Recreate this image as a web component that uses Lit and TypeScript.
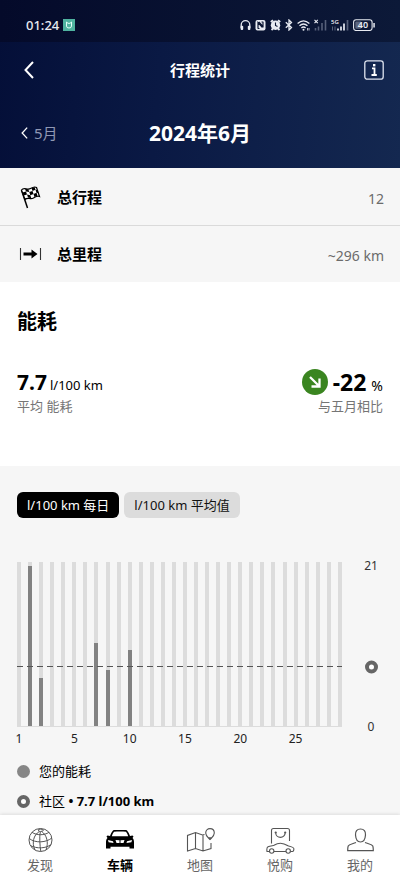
import { LitElement, html, css, svg } from "lit";
import { customElement, state } from "lit/decorators.js";
import { classMap } from "lit/directives/class-map.js";
import { styleMap } from "lit/directives/style-map.js";

const SCALE_MAX = 21;
const COMMUNITY_AVERAGE = 7.7;
const DAYS = 30;

/** Consumption in l/100 km, keyed by column index. */
const CONSUMPTION: Record<number, number> = { 1: 20.5, 2: 6.2, 7: 10.7, 8: 7.3, 10: 9.8 };
const AXIS_LABELS: Record<number, string> = { 0: "1", 5: "5", 10: "10", 15: "15", 20: "20", 25: "25" };

const FONT = css`"Noto Sans", "Noto Sans CJK SC", sans-serif`;

const chevron = html`<svg class="chevron" viewBox="0 0 10 18" aria-hidden="true">
  <path d="M9 1 L1.5 9 L9 17" fill="none" stroke="currentColor" stroke-width="2" />
</svg>`;

const globeIcon = svg`
  <g fill="none" stroke="#555" stroke-width="1">
    <circle cx="14.500" cy="13" r="11.500" />
    <path d="M13.300 4.500 C7.500 8 5.500 16 9 23 M14.300 4.800 C13.300 10 13.800 18 14.800 24.500 M15.800 4.500 C20.500 8 23 15 20 23" />
    <path d="M6 5.300 C10.500 8.500 18.500 8.500 23 5.300 M3.200 11.500 C9.500 16.500 20.500 15.500 25.800 11 M4.500 18.500 C10.500 22 20.500 21.500 24.800 17.500" />
    <path d="M12 3.200 C13 5 16 5 17.500 3.200 C16.500 1.800 13 1.800 12 3.200 Z" />
  </g>`;

const carIcon = svg`
  <path fill="#000" fill-rule="evenodd" d="M7 3.500 C7.500 3 8.300 3 9 3 H19 C20 3 20.500 3 21 3.500 C22.300 5 23.300 7 24 9 L26.500 8.500 L27.500 9.500 L26.500 11 C27.600 12 28 13.500 28 15 V21.500 H23.500 V19.800 H4.500 V21.500 H0 V15 C0 13.500 .4 12 1.500 11 L.5 9.500 L1.500 8.500 L4 9 C4.700 7 5.700 5 7 3.500 Z M8 4.700 C7 6 6.300 7.500 5.800 9.300 H22.200 C21.700 7.500 21 6 20 4.700 C16 4.300 12 4.300 8 4.700 Z M2 13 L2.600 15.300 L7.500 16 L7 14.200 Z M26 13 L25.400 15.300 L20.500 16 L21 14.200 Z M9.500 13 L10.500 16 H13.500 V13.300 Z M18.500 13 L17.500 16 H14.500 V13.300 Z" />`;

const mapIcon = svg`
  <g fill="none" stroke="#555" stroke-width="1.100">
    <path d="M18.500 7.500 L16.500 8 L9.500 5.500 L1.500 8.500 V24 L9.500 21.500 L17 24 L25 21.500 V16 M9.500 5.500 V21.500 M17 8 V24" />
    <path d="M24 12.500 C22.500 10.800 19.700 9.200 19.700 6 C19.700 3.300 21.600 1.600 24 1.600 C26.400 1.600 28.300 3.300 28.300 6 C28.300 9.200 25.500 10.800 24 12.500 Z" />
  </g>
  <path d="M22 10.300 H26 L24 13 Z" fill="#555" />`;

const shopIcon = svg`
  <g fill="none" stroke="#555" stroke-width="1.100">
    <path d="M5.500 16.500 V3.500 Q5.500 1.500 7.500 1.500 H21.500 Q23.500 1.500 23.500 3.500 V14" />
    <path d="M9.700 5.500 C9.700 12 19.200 12 19.200 5.500" />
    <path d="M3.500 24.500 H1 C.6 22 .8 20.500 2 19.800 C4 19 6.500 18.700 8 18.300 C10 17 12 16.200 14.500 16.200 C18 16.200 20 17.500 22 18.800 C25 19.500 27.600 20 27.800 21.500 C28 23 27.500 24.500 26.500 24.500 H24.500 M8 24.500 H20" />
    <circle cx="5.700" cy="24" r="2.200" />
    <circle cx="22.200" cy="24" r="2.200" />
  </g>
  <g fill="#555"><circle cx="9.700" cy="5.500" r="1.100" /><circle cx="19.200" cy="5.500" r="1.100" /></g>`;

const profileIcon = svg`
  <g fill="none" stroke="#555" stroke-width="1.200">
    <path d="M14.500 2 C18 2 19.800 4.300 19.500 8 C19.200 12 17.300 15 14.500 15 C11.700 15 9.800 12 9.500 8 C9.200 4.300 11 2 14.500 2 Z" />
    <path d="M10 15.500 C6.500 17 3 17.200 2.200 19 C1.700 20.300 1.700 22 1.700 23.700 H27.300 C27.300 22 27.300 20.300 26.800 19 C26 17.200 22.500 17 19 15.500" />
  </g>`;

const TABS = [
  { label: "发现", icon: globeIcon, active: false },
  { label: "车辆", icon: carIcon, active: true },
  { label: "地图", icon: mapIcon, active: false },
  { label: "悦购", icon: shopIcon, active: false },
  { label: "我的", icon: profileIcon, active: false },
];

@customElement("status-bar")
export class StatusBar extends LitElement {
  static styles = css`
    :host {
      display: flex;
      align-items: center;
      gap: 4px;
      height: 42px;
      padding: 8px 25px 0 26px;
      box-sizing: border-box;
      color: #e8ebf2;
      font: 500 13px/18px ${FONT};
      background: linear-gradient(90deg, #040a2a, #0c1938);
    }
    .app { width: 12px; height: 12px; }
    .icons { display: flex; align-items: center; gap: 4px; margin-left: auto; }
    .icons svg { height: 12px; display: block; }
    .w8 { width: 8px; }
    .w11 { width: 11px; }
    .w13 { width: 13px; }
    .w18 { width: 18px; }
    .w22 { width: 22px; }
    text { font-family: ${FONT}; font-weight: 600; }
  `;

  render() {
    return html`
      <span>01:24</span>
      <svg class="app" viewBox="0 0 12 12" aria-hidden="true">
        <rect width="12" height="12" fill="#4fb3a0" />
        <path d="M3.500 3 V7 Q3.500 9 6 9 Q8.500 9 8.500 7 V3 L7 4.300 H5 Z" fill="none" stroke="#e4fff8" stroke-width="1" />
      </svg>
      <div class="icons">
        <svg class="w11" viewBox="0 0 11 12" aria-hidden="true">
          <path d="M1.200 9 V6 A4.300 4.300 0 0 1 9.800 6 V9" fill="none" stroke="currentColor" stroke-width="1.300" />
          <rect x=".6" y="6.800" width="2.600" height="4.200" rx="1" fill="currentColor" />
          <rect x="7.800" y="6.800" width="2.600" height="4.200" rx="1" fill="currentColor" />
        </svg>
        <svg class="w11" viewBox="0 0 11 12" aria-hidden="true">
          <rect x=".5" y="1" width="10" height="10.500" rx="2" fill="currentColor" />
          <path d="M3 9.700 V3.500 L7.500 8.500 M3.800 2.800 L8 7.300 V2.800 M3 9.500 H4.500 M6.500 3 H8" fill="none" stroke="#0a1533" stroke-width="1.200" />
        </svg>
        <svg class="w11" viewBox="0 0 11 12" aria-hidden="true">
          <circle cx="5.500" cy="6.200" r="4.700" fill="currentColor" />
          <path d="M.8 3 L3 1.200 M10.200 3 L8 1.200 M1.500 11 L3 9.500 M9.500 11 L8 9.500" stroke="currentColor" stroke-width="1.800" />
          <path d="M5.500 3.500 V6.500 L7.500 7.500" fill="none" stroke="#0a1533" stroke-width="1.100" />
        </svg>
        <svg class="w8" viewBox="0 0 8 12" aria-hidden="true">
          <path d="M.8 3.300 L6.500 8.500 L4 11 V1 L6.500 3.500 L.8 8.800" fill="none" stroke="currentColor" stroke-width="1.300" />
        </svg>
        <svg class="w13" viewBox="0 0 13 12" aria-hidden="true">
          <path d="M.6 4.600 Q6.500 -.8 12.400 4.600 M2.500 6.800 Q6.500 3.200 10.500 6.800 M4.400 8.900 Q6.500 7 8.600 8.900" fill="none" stroke="currentColor" stroke-width="1.300" />
          <circle cx="6.500" cy="10.700" r="1" fill="currentColor" />
          <path d="M10.500 9 V11.500 M12 9 V11.500" stroke="currentColor" stroke-width=".8" />
        </svg>
        <svg class="w13" viewBox="0 0 13 12" aria-hidden="true">
          <path d="M.5 .8 L3.800 4.200 M3.800 .8 L.5 4.200" stroke="currentColor" stroke-width="1.100" />
          <path d="M1.500 11.500 V9 M4.500 11.500 V7.500 M8 11.500 V4 M11.500 11.500 V1" stroke="#56607a" stroke-width="1.600" />
        </svg>
        <svg class="w18" viewBox="0 0 18 12" aria-hidden="true">
          <text x="0" y="5" font-size="6" fill="currentColor">5G</text>
          <path d="M1.500 7.500 V11.500 M4 7.500 V11.500" stroke="#56607a" stroke-width="1" />
          <path d="M7 11.500 V9.500 M10 11.500 V7.500 M13 11.500 V4.500" stroke="currentColor" stroke-width="1.700" />
          <path d="M16.500 11.500 V1" stroke="#56607a" stroke-width="1.700" />
        </svg>
        <svg class="w22" viewBox="0 0 22 12" role="img" aria-label="40%">
          <rect x=".6" y=".8" width="18.500" height="10.700" rx="2.500" fill="none" stroke="currentColor" stroke-width="1.100" />
          <rect x="2.300" y="2.500" width="6" height="7.300" rx="1" fill="#5c667e" />
          <rect x="20.300" y="4" width="1.500" height="4.500" fill="currentColor" />
          <text x="10" y="9.300" font-size="9" text-anchor="middle" fill="currentColor">40</text>
        </svg>
      </div>
    `;
  }
}

@customElement("consumption-chart")
export class ConsumptionChart extends LitElement {
  static styles = css`
    :host {
      display: grid;
      grid-template-columns: 1fr 58px;
      color: #333;
      font: 12px/16px ${FONT};
    }
    .plot { position: relative; }
    .days { display: flex; justify-content: space-between; }
    .day { display: flex; flex-direction: column; align-items: center; width: 4px; gap: 4px; }
    .track {
      display: flex;
      align-items: flex-end;
      width: 4px;
      height: 165px;
      background: #dcdcdc;
    }
    .bar { width: 4px; background: #828282; }
    .label { height: 16px; white-space: nowrap; color: #222; }
    .frame {
      position: absolute;
      inset: 0 0 auto;
      height: 165px;
    }
    .base { box-sizing: border-box; border-bottom: 1px solid #dcdcdc; }
    .average {
      position: absolute;
      left: 0;
      right: 0;
      height: 1px;
      background: repeating-linear-gradient(90deg, #555 0 6px, transparent 6px 10px);
    }
    .scale {
      position: relative;
      height: 165px;
      display: flex;
      flex-direction: column;
      justify-content: space-between;
      align-items: center;
    }
    .top { margin-top: -4px; }
    .zero { margin-bottom: -8px; }
    .ring {
      position: absolute;
      width: 13px;
      height: 13px;
      box-sizing: border-box;
      border: 4px solid #666;
      border-radius: 50%;
      background: #fff;
      transform: translateY(50%);
    }
  `;

  render() {
    const average = { bottom: `${(COMMUNITY_AVERAGE / SCALE_MAX) * 100}%` };
    return html`
      <div class="plot">
        <div class="frame base"></div>
        <div class="days">
          ${Array.from({ length: DAYS }, (_, i) => html`
            <div class="day">
              <div class="track">
                ${CONSUMPTION[i]
                  ? html`<div class="bar" style=${styleMap({ height: `${(CONSUMPTION[i] / SCALE_MAX) * 100}%` })}></div>`
                  : null}
              </div>
              <span class="label">${AXIS_LABELS[i] ?? ""}</span>
            </div>
          `)}
        </div>
        <div class="frame"><div class="average" style=${styleMap(average)}></div></div>
      </div>
      <div class="scale">
        <span class="top">${SCALE_MAX}</span>
        <span class="ring" style=${styleMap(average)}></span>
        <span class="zero">0</span>
      </div>
    `;
  }
}

@customElement("app-root")
export class AppRoot extends LitElement {
  @state() private mode: "daily" | "average" = "daily";

  static styles = css`
    :host {
      display: flex;
      flex-direction: column;
      min-height: 100vh;
      background: #f6f6f6;
      color: #000;
      font: 13px/20px ${FONT};
    }
    h1, h2, p, dl, dd, dt, ul { margin: 0; padding: 0; }
    button { border: 0; padding: 0; background: none; color: inherit; font: inherit; cursor: pointer; }
    .header { color: #fff; background: linear-gradient(95deg, #040f38, #0a1944 40%, #142850); }
    .bar {
      display: grid;
      grid-template-columns: 1fr auto 1fr;
      align-items: center;
      height: 56px;
      padding: 0 16px;
    }
    .bar.month { height: 70px; padding: 0 21px; }
    .bar > button { display: flex; align-items: center; justify-self: start; }
    .bar > .back { padding-left: 8px; }
    .bar > .info { justify-self: end; }
    .info svg { width: 20px; height: 20px; }
    .back .chevron { width: 10px; height: 18px; }
    .prev { gap: 6px; font-size: 15px; color: #8f98b4; }
    .prev .chevron { width: 7px; height: 12px; color: #fff; }
    .title { font-size: 15px; font-weight: 700; }
    .bar.month h2 { font-size: 21px; line-height: 28px; font-weight: 700; }
    .row {
      display: grid;
      grid-template-columns: 40px 1fr auto;
      align-items: center;
      height: 57px;
      box-sizing: border-box;
      padding: 0 16px 0 17px;
    }
    .row + .row { border-top: 1px solid #dadada; }
    .row svg { width: 26px; height: 24px; }
    .row dt { font-size: 15px; font-weight: 700; }
    .row dd { padding-top: 4px; font-size: 14px; color: #6b6b6b; }
    .summary { background: #fff; padding: 26px 17px 50px; }
    .summary h2 { font-size: 20px; line-height: 28px; font-weight: 700; }
    .figures { display: flex; justify-content: space-between; padding-top: 32px; }
    .figure { display: flex; align-items: baseline; gap: 3px; height: 28px; line-height: 28px; }
    .figure strong { font-size: 21px; }
    .figure.trend { justify-content: flex-end; gap: 5px; }
    .trend strong { font-size: 23px; }
    .trend span { font-size: 14px; }
    .trend svg { width: 26px; height: 26px; align-self: center; }
    .note { color: #757575; }
    .trend + .note { text-align: right; }
    .details { flex: 1; padding: 26px 0 2px 17px; }
    .chips { display: flex; gap: 5px; padding-bottom: 44px; }
    .chip { height: 26px; padding: 0 10px; border-radius: 6px; background: #dcdcdc; color: #111; }
    .chip.on { background: #000; color: #fff; }
    .legend { list-style: none; display: grid; gap: 6px; padding-top: 12px; }
    .legend li { display: flex; align-items: center; gap: 9px; height: 24px; }
    .dot { width: 13px; height: 13px; box-sizing: border-box; border-radius: 50%; background: #868686; }
    .dot.ring { border: 4px solid #666; background: #fff; }
    .tabs {
      position: sticky;
      bottom: 0;
      display: grid;
      grid-template-columns: repeat(5, 1fr);
      height: 69px;
      background: #fff;
      box-shadow: 0 -1px 3px #dedede;
    }
    .tab {
      display: flex;
      flex-direction: column;
      align-items: center;
      padding-top: 12px;
      color: #666;
      text-decoration: none;
    }
    .tab.on { color: #000; font-weight: 700; }
    .tab svg { width: 29px; height: 28px; }
  `;

  private chip(mode: "daily" | "average", label: string) {
    const on = this.mode === mode;
    return html`<button
      class=${classMap({ chip: true, on })}
      aria-pressed=${on}
      @click=${() => (this.mode = mode)}
    >${label}</button>`;
  }

  render() {
    return html`
      <header class="header">
        <status-bar></status-bar>
        <div class="bar">
          <button class="back" aria-label="返回">${chevron}</button>
          <h1 class="title">行程统计</h1>
          <button class="info" aria-label="信息">
            <svg viewBox="0 0 20 20" aria-hidden="true">
              <rect x=".8" y=".8" width="18.400" height="18.400" rx="2.500" fill="none" stroke="#dfe4ef" stroke-width="1.300" />
              <path d="M8 8.300 H10.500 V15 M7.500 15 H12.800" fill="none" stroke="#fff" stroke-width="1.800" />
              <rect x="9" y="4" width="2.400" height="2.400" fill="#fff" />
            </svg>
          </button>
        </div>
        <div class="bar month">
          <button class="prev">${chevron}<span>5月</span></button>
          <h2>2024年6月</h2>
        </div>
      </header>

      <dl>
        <div class="row">
          <svg viewBox="0 0 26 24" aria-hidden="true">
            <path d="M4.500 5 L10.500 23" stroke="#000" stroke-width="1.500" />
            <path d="M4.500 5 C7 1.500 10 5.500 13.500 3.500 C16 2 18 1.500 19.500 2.500 L22.500 11.500 C20 10.500 18.500 12 16.500 13 C13 15 11 11.500 8 14.500 Z" fill="#fff" stroke="#000" stroke-width="1.200" />
            <path d="M8 3.700 L11.300 4.200 L12.300 7 L9 6.500 Z M14.500 3 L17.500 2 L18.500 4.800 L15.500 6 Z M5.500 7.500 L9 6.500 L10 9.500 L6.600 10.600 Z M12.300 7 L15.500 6 L16.500 9 L13.300 10.200 Z M18.500 4.800 L20.500 5 L21.500 8 L19.500 7.800 Z M10 9.500 L13.300 10.200 L14.300 13.300 L11 12.500 Z M16.500 9 L19.500 7.800 L20.500 10.800 L17.500 12 Z" fill="#000" />
          </svg>
          <dt>总行程</dt>
          <dd>12</dd>
        </div>
        <div class="row">
          <svg viewBox="0 0 26 24" aria-hidden="true">
            <path d="M3.500 6 V18 M23.500 6 V18" stroke="#333" stroke-width="1.100" />
            <path d="M6.500 10.600 H14.500 V7.500 L20.500 12 L14.500 16.500 V13.400 H6.500 Z" fill="#000" />
          </svg>
          <dt>总里程</dt>
          <dd>~296 km</dd>
        </div>
      </dl>

      <section class="summary">
        <h2>能耗</h2>
        <div class="figures">
          <div>
            <p class="figure"><strong>7.7</strong><span>l/100 km</span></p>
            <p class="note">平均 能耗</p>
          </div>
          <div>
            <p class="figure trend">
              <svg viewBox="0 0 26 26" aria-hidden="true">
                <circle cx="13" cy="13" r="13" fill="#3a8520" />
                <path d="M8 8 L17 17 M17.500 9.500 V17.500 H9.500" fill="none" stroke="#fff" stroke-width="2.300" />
              </svg>
              <strong>-22</strong><span>%</span>
            </p>
            <p class="note">与五月相比</p>
          </div>
        </div>
      </section>

      <section class="details">
        <div class="chips">
          ${this.chip("daily", "l/100 km 每日")}
          ${this.chip("average", "l/100 km 平均值")}
        </div>
        <consumption-chart></consumption-chart>
        <ul class="legend">
          <li><span class="dot"></span>您的能耗</li>
          <li><span class="dot ring"></span><span>社区 <b>• ${COMMUNITY_AVERAGE} l/100 km</b></span></li>
        </ul>
      </section>

      <nav class="tabs">
        ${TABS.map(
          (tab) => html`<a class=${classMap({ tab: true, on: tab.active })} href="#">
            <svg viewBox="0 0 29 28" aria-hidden="true">${tab.icon}</svg>
            <span>${tab.label}</span>
          </a>`,
        )}
      </nav>
    `;
  }
}
